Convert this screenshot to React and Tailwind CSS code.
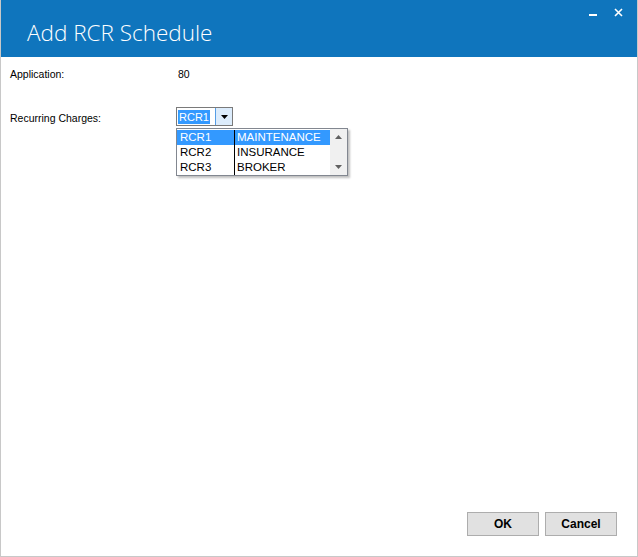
import React from "react";

const rows = [
  { code: "RCR1", name: "MAINTENANCE" },
  { code: "RCR2", name: "INSURANCE" },
  { code: "RCR3", name: "BROKER" },
];

export default function App() {
  return (
    <div className="w-[638px] h-[557px] flex flex-col bg-white border-x border-b border-[#c8c8c8] text-[10.5px] text-black font-['Liberation_Sans',Arial,sans-serif] overflow-hidden">
      <div className="h-[57px] shrink-0 bg-[#0f75bd] flex items-start justify-between">
        <div className="pl-[26px] pt-[18px] text-[22.5px] leading-[30px] text-white font-light font-['Open_Sans','Noto_Sans',sans-serif]">
          Add RCR Schedule
        </div>
        <div className="flex items-center gap-[16px] pr-[14px] pt-[8px] text-white">
          <svg width="9" height="9" viewBox="0 0 9 9">
            <rect x="0" y="6" width="8" height="2" fill="white" />
          </svg>
          <svg width="9" height="9" viewBox="0 0 9 9">
            <path d="M1 1 L8 8 M8 1 L1 8" stroke="white" strokeWidth="1.6" />
          </svg>
        </div>
      </div>

      <div className="flex-1 flex flex-col pl-[9px] pt-[10px]">
        <div className="flex items-center h-[16px]">
          <div className="w-[168px]">Application:</div>
          <div>80</div>
        </div>

        <div className="flex items-start mt-[24px]">
          <div className="w-[166px] pt-[4px]">Recurring Charges:</div>
          <div className="flex flex-col">
            <div className="w-[57px] h-[19px] border border-[#7a7a7a] flex items-stretch bg-white text-[11px]">
              <div className="flex-1 flex items-center pl-[1px]">
                <span className="bg-[#3399ff] text-white px-[1px] leading-[14px]">RCR1</span>
              </div>
              <div className="w-[17px] bg-[#dcecfc] border-l border-[#569de5] flex items-center justify-center">
                <svg width="7" height="4" viewBox="0 0 7 4">
                  <path d="M0 0 L7 0 L3.5 4 Z" fill="black" />
                </svg>
              </div>
            </div>
            <div className="mt-[2px] w-[172px] h-[48px] border border-[#828790] bg-white flex shadow-[2px_2px_2px_rgba(0,0,0,0.25)]">
              <div className="flex-1 flex flex-col pt-[1px]">
                {rows.map((r, i) => (
                  <div
                    key={r.code}
                    className={`flex h-[15px] leading-[15px] text-[11.5px] ${i === 0 ? "bg-[#3399ff] text-white" : ""}`}
                  >
                    <div className="w-[58px] pl-[3px] border-r border-black">{r.code}</div>
                    <div className="pl-[2px]">{r.name}</div>
                  </div>
                ))}
              </div>
              <div className="w-[17px] bg-[#f0f0f0] flex flex-col items-center justify-between py-[6px]">
                <svg width="7" height="4" viewBox="0 0 7 4">
                  <path d="M0 4 L7 4 L3.5 0 Z" fill="#606060" />
                </svg>
                <svg width="7" height="4" viewBox="0 0 7 4">
                  <path d="M0 0 L7 0 L3.5 4 Z" fill="#606060" />
                </svg>
              </div>
            </div>
          </div>
        </div>

        <div className="flex-1" />

        <div className="flex justify-end gap-[6px] pr-[20px] pb-[20px]">
          <button className="w-[72px] h-[24px] bg-[#e1e1e1] border border-[#adadad] font-bold text-[12px]">
            OK
          </button>
          <button className="w-[72px] h-[24px] bg-[#e1e1e1] border border-[#adadad] font-bold text-[12px]">
            Cancel
          </button>
        </div>
      </div>
    </div>
  );
}
